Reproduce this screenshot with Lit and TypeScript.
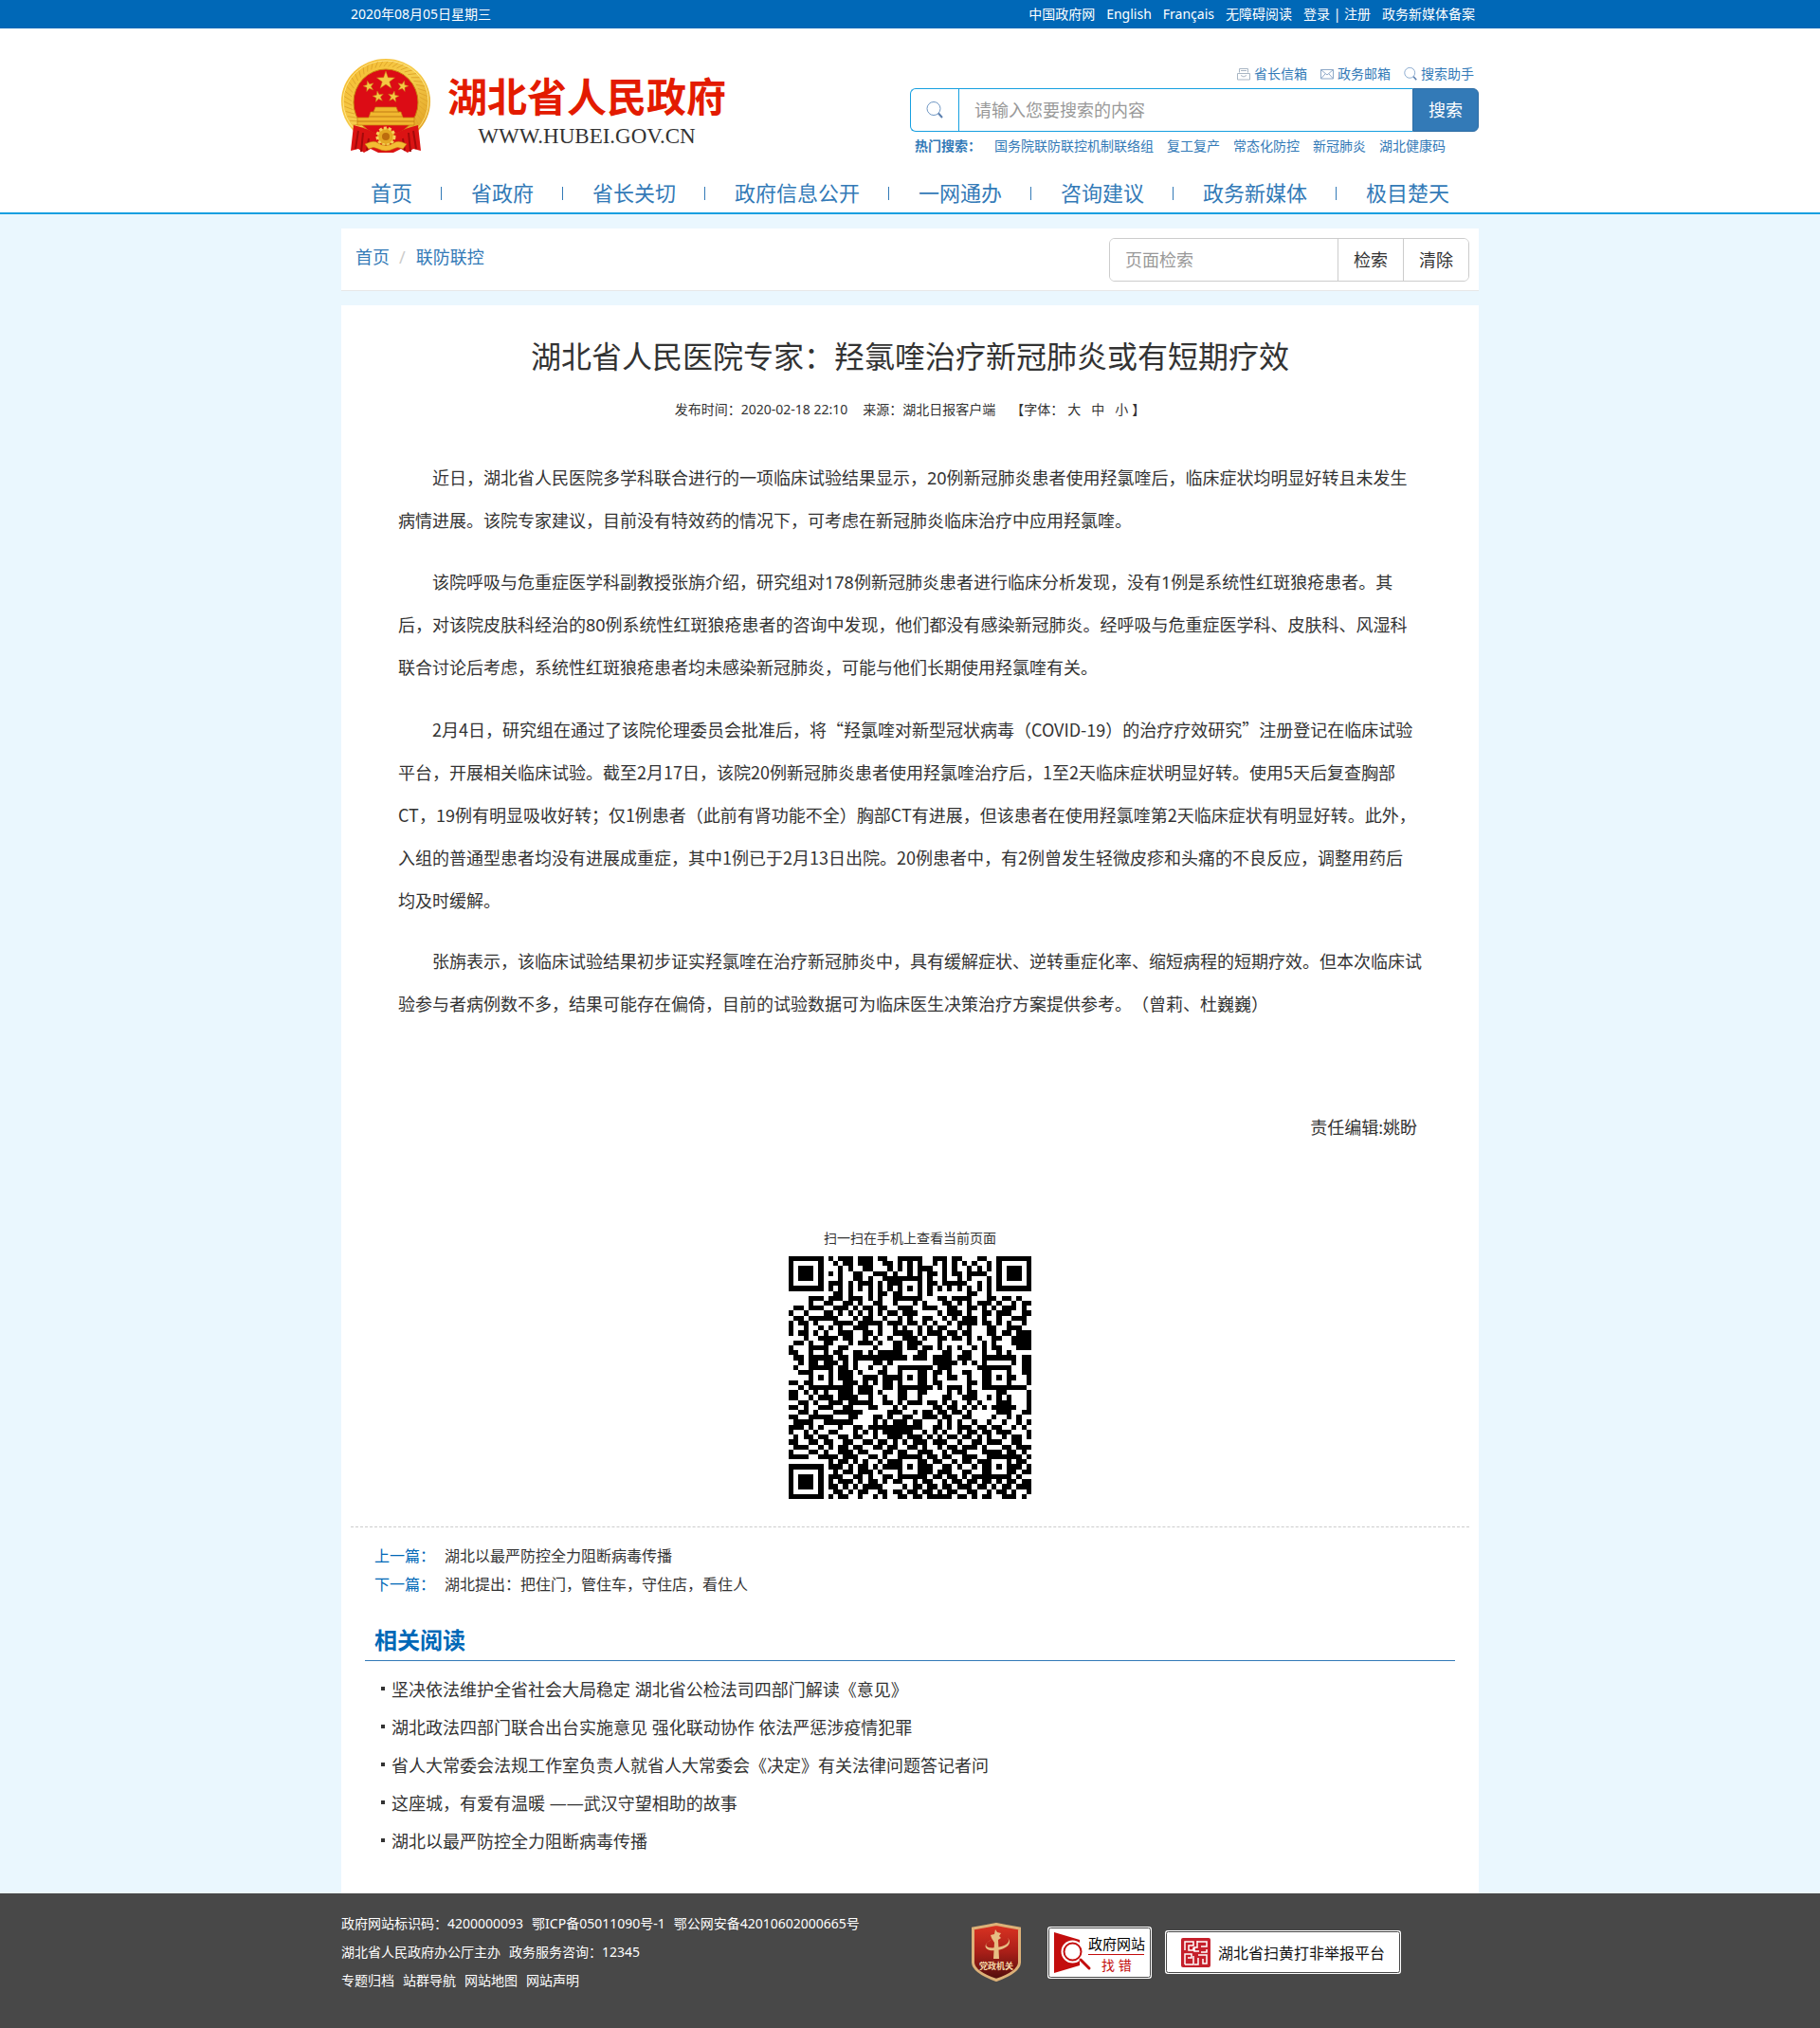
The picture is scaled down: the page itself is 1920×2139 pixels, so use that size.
import { LitElement, html, css, svg } from "lit";
import { customElement, state } from "lit/decorators.js";
import { classMap } from "lit/directives/class-map.js";

const TOP_LINKS = ["中国政府网", "English", "Français", "无障碍阅读"];
const NAV = ["首页", "省政府", "省长关切", "政府信息公开", "一网通办", "咨询建议", "政务新媒体", "极目楚天"];
const HOT = ["国务院联防联控机制联络组", "复工复产", "常态化防控", "新冠肺炎", "湖北健康码"];
// A word joiner (U+2060) keeps 均及时 on one line.
const PARAGRAPHS = [
  "近日，湖北省人民医院多学科联合进行的一项临床试验结果显示，20例新冠肺炎患者使用羟氯喹后，临床症状均明显好转且未发生病情进展。该院专家建议，目前没有特效药的情况下，可考虑在新冠肺炎临床治疗中应用羟氯喹。",
  "该院呼吸与危重症医学科副教授张旃介绍，研究组对178例新冠肺炎患者进行临床分析发现，没有1例是系统性红斑狼疮患者。其后，对该院皮肤科经治的80例系统性红斑狼疮患者的咨询中发现，他们都没有感染新冠肺炎。经呼吸与危重症医学科、皮肤科、风湿科联合讨论后考虑，系统性红斑狼疮患者均未感染新冠肺炎，可能与他们长期使用羟氯喹有关。",
  "2月4日，研究组在通过了该院伦理委员会批准后，将“羟氯喹对新型冠状病毒（COVID-19）的治疗疗效研究”注册登记在临床试验平台，开展相关临床试验。截至2月17日，该院20例新冠肺炎患者使用羟氯喹治疗后，1至2天临床症状明显好转。使用5天后复查胸部CT，19例有明显吸收好转；仅1例患者（此前有肾功能不全）胸部CT有进展，但该患者在使用羟氯喹第2天临床症状有明显好转。此外，入组的普通型患者均没有进展成重症，其中1例已于2月13日出院。20例患者中，有2例曾发生轻微皮疹和头痛的不良反应，调整用药后均\u2060及时缓解。",
  "张旃表示，该临床试验结果初步证实羟氯喹在治疗新冠肺炎中，具有缓解症状、逆转重症化率、缩短病程的短期疗效。但本次临床试验参与者病例数不多，结果可能存在偏倚，目前的试验数据可为临床医生决策治疗方案提供参考。（曾莉、杜巍巍）",
];
const RELATED = [
  "坚决依法维护全省社会大局稳定 湖北省公检法司四部门解读《意见》",
  "湖北政法四部门联合出台实施意见 强化联动协作 依法严惩涉疫情犯罪",
  "省人大常委会法规工作室负责人就省人大常委会《决定》有关法律问题答记者问",
  "这座城，有爱有温暖 ——武汉守望相助的故事",
  "湖北以最严防控全力阻断病毒传播",
];

// Data modules of the page's QR code, 49 x 49, in groups of seven.
const QR_ROWS = [
  "1111111 0101110 1110110 0111110 0111011 0001100 1111111",
  "1000001 0010110 1110011 0101010 0101010 1010010 1000001",
  "1011101 0001010 0110001 0101011 1001010 0101010 1011101",
  "1011101 0101001 1001110 1001010 1101011 0111100 1011101",
  "1011101 0001001 1010011 1001010 1001001 0100010 1011101",
  "1000001 0111010 1110101 1001010 1101111 1001010 1000001",
  "1111111 0101010 1010101 0101010 1010101 0101010 1111111",
  "0000000 0011010 0010110 1110010 1000000 0110010 0000000",
  "0000111 0111011 1010100 1001110 0011011 1100011 0110100",
  "0000101 1100110 1001100 1000101 0001101 0101110 1001011",
  "0110111 0011101 0110110 0111001 1100110 0110101 0111010",
  "1001001 1101010 1010101 1011100 0010111 0100110 1110011",
  "0110111 1110001 0110010 0101001 1001010 1110100 1001110",
  "1011010 0011110 1111101 1101101 0100101 1110110 1010010",
  "1001001 0101001 1100100 1010010 1011001 0100011 0011100",
  "1011010 1001110 0110100 1111010 1110110 1100011 0110111",
  "0001001 1110110 0101001 0011101 0011011 0101001 1001111",
  "0110100 1100010 1110100 1101110 0010000 0100101 0001111",
  "1000111 1001100 0001000 1101101 1010101 0010101 1000111",
  "1100100 1011001 1010111 1100011 0001100 1100100 1010000",
  "0110111 1101101 1111111 1110111 0111101 1100111 1111011",
  "0010111 1110101 0001101 0000000 0111110 1010100 0001011",
  "0100111 1101101 0010010 0111111 1011100 0001111 1110011",
  "0011100 0101110 1000110 0110001 0110100 1100101 0010011",
  "0000101 0101110 0111011 1110101 0100110 0100101 0101001",
  "1101100 0100111 0101011 0010001 0110000 0110111 0010001",
  "0010111 1111110 1110011 0011111 1010111 0100101 1111110",
  "1101010 1001110 1110100 0110011 0000101 0110000 1100001",
  "1100101 1101111 0010010 0110010 0001100 1110010 1010001",
  "0011011 0111011 1110011 0101110 1101010 0101000 1110001",
  "1101001 1100110 0011000 1010000 0110110 1010101 1111001",
  "0011010 0011111 1000001 1100101 1011011 0100000 1110011",
  "1100110 1100011 0001101 0011001 1101100 1100001 0010100",
  "0111101 1111110 0001010 1110110 0010101 0010010 0100101",
  "1110101 0001001 1011111 1111110 0110101 1101101 1001010",
  "1001010 0110001 0101011 1111001 0101001 0110110 1110001",
  "0101101 1001101 1001001 1101110 1010110 1101010 0101101",
  "1100110 1100110 0110110 1010111 0111001 0011011 1001100",
  "0111001 0101101 1001101 1001101 0010110 1110100 0110111",
  "1000110 1001110 1100011 0110011 1001011 1000111 1011010",
  "1111000 1110111 0011010 0111110 1101100 1110010 1001101",
  "0000000 0101101 0100101 1000101 0110010 1101101 1000110",
  "1111111 0111010 1101011 1010101 1001101 0010101 0101101",
  "1000001 0010110 1110100 0110001 1011100 1100111 0001011",
  "1011101 0111001 1010011 0111111 0110110 1011111 1110100",
  "1011101 0101110 1011010 1100101 1001011 0110110 1011011",
  "1011101 0110101 0111100 0010110 1101101 1101101 0110111",
  "1000001 0011010 1100110 1101101 1010110 0110010 1101001",
  "1111111 0101100 1001010 0110110 1111101 1010110 0111010",
].map((row) => row.replaceAll(" ", ""));

// Finder, timing and alignment squares lie over the data modules.
function isDark(row: number, col: number): boolean {
  for (const [r, c] of [[3, 3], [3, 45], [45, 3]]) {
    const d = Math.max(Math.abs(row - r), Math.abs(col - c));
    if (d <= 4) return d !== 2 && d !== 4;
  }
  for (const r of [6, 24, 42]) {
    for (const c of [6, 24, 42]) {
      if ((r === 6 && c !== 24) || (c === 6 && r !== 24)) continue;
      const d = Math.max(Math.abs(row - r), Math.abs(col - c));
      if (d <= 2) return d !== 1;
    }
  }
  if (row === 6) return col % 2 === 0;
  if (col === 6) return row % 2 === 0;
  return QR_ROWS[row][col] === "1";
}

function qrPath(): string {
  let d = "";
  for (let r = 0; r < 49; r++) {
    for (let c = 0; c < 49; c++) {
      if (isDark(r, c)) d += `M${c} ${r}h1v1h-1z`;
    }
  }
  return d;
}

function star(cx: number, cy: number, r: number, turn = 0): string {
  const pts: string[] = [];
  for (let i = 0; i < 10; i++) {
    const a = ((-90 + turn + i * 36) * Math.PI) / 180;
    const k = i % 2 ? r * 0.4 : r;
    pts.push(`${(cx + k * Math.cos(a)).toFixed(2)},${(cy + k * Math.sin(a)).toFixed(2)}`);
  }
  return pts.join(" ");
}

const grains = Array.from({ length: 40 }, (_, i) => {
  const t = ((128 + i * 7.3) * Math.PI) / 180;
  return svg`<path d="M${(47 + 36 * Math.cos(t)).toFixed(1)} ${(44 + 36 * Math.sin(t)).toFixed(1)}L${(47 + 44 * Math.cos(t + 0.12)).toFixed(1)} ${(44 + 42 * Math.sin(t + 0.12)).toFixed(1)}"/>`;
});

const emblem = html`<svg class="emblem" viewBox="0 0 94 100" aria-hidden="true">
  <defs>
    <linearGradient id="gold" x1="0" y1="0" x2="1" y2="1">
      <stop offset="0" stop-color="#f6b92c" /><stop offset=".5" stop-color="#f5cd4d" /><stop offset="1" stop-color="#dc9616" />
    </linearGradient>
  </defs>
  <ellipse cx="47" cy="45" rx="47" ry="45" fill="url(#gold)" />
  <g fill="none" stroke="#e0a62c" stroke-width="1">${grains}</g>
  <ellipse cx="47" cy="45" rx="45" ry="43" fill="none" stroke="#ffe486" stroke-width="1" />
  <ellipse cx="47" cy="46" rx="34" ry="35" fill="#dc0c15" stroke="#c98310" />
  <g fill="#f5c944" stroke="#c47a10" stroke-width=".5">
    <polygon points="${star(47, 23, 10)}" />
    <polygon points="${star(29, 29, 6, -15)}" />
    <polygon points="${star(65, 29, 6, 15)}" />
    <polygon points="${star(39, 40, 6, -10)}" />
    <polygon points="${star(55, 40, 6, 10)}" />
  </g>
  <path d="M36 51h22l2 5h3l2 6h12v8H17v-8h12l2-6h3z" fill="#f1b72f" stroke="#c77d10" stroke-width=".7" />
  <path d="M33 56h28M30 61h34M17 66h60" stroke="#b76d0c" stroke-width=".8" />
  <path d="M13 70q13 3 22 8l12 4 12-4q9-5 22-8l3 27-8-2-6 4-7-4-8 4H39l-8-4-7 4-6-4-8 2z" fill="#db1313" />
  <path d="M18 76l-3 19M23 78l-2 20M29 84l-2 13M76 76l3 19M71 78l2 20M65 84l2 13" stroke="#a30a0a" stroke-width="2" />
  <circle cx="47" cy="82" r="9" fill="#e4a823" stroke="#f7d15a" stroke-width="3" stroke-dasharray="3 2" />
  <circle cx="47" cy="82" r="4" fill="#bd6c0d" />
  <path d="M25 90q10-5 14-1 8 5 16 0 5-4 14 1l-4 5q-6-3-10 0-8 4-16 0-5-3-10 0z" fill="#f3bd33" stroke="#c47a10" stroke-width=".6" />
</svg>`;

const magnifier = (cls: string) => html`<svg class=${cls} viewBox="0 0 18 18" aria-hidden="true">
  <circle cx="8" cy="7.500" r="7" fill="none" stroke="#6f97c4" />
  <path d="M13 12.500l4 4.500" stroke="#5b7fae" stroke-width="2" />
</svg>`;

const printer = html`<svg class="mini" viewBox="0 0 14 14" fill="none" stroke="#a9b6c4" aria-hidden="true">
  <path d="M2.500 5.500v-4h9v4M4 3.500h6M.5 6.500h13v6.500H.5zM4 8.500q3 3 6 0" />
</svg>`;
const envelope = html`<svg class="mini" viewBox="0 0 14 14" fill="none" stroke="#8fa9c8" aria-hidden="true">
  <path d="M.5 2.500h13v9.500H.5zM.5 2.500l6.500 5.500 6.500-5.500M.5 12l4.500-5M13.500 12l-4.500-5" />
</svg>`;

const shield = html`<svg class="shield" viewBox="0 0 52 62" role="img" aria-label="党政机关">
  <defs>
    <linearGradient id="red" x1="0" y1="0" x2="0" y2="1">
      <stop offset="0" stop-color="#dc3322" /><stop offset=".5" stop-color="#a91f18" /><stop offset="1" stop-color="#4d0c0c" />
    </linearGradient>
  </defs>
  <path d="M1.500 6Q14 4 26 1.500 38 4 50.500 6v36Q50 52 26 60.500 2 52 1.500 42z" fill="url(#red)" stroke="#ddb178" stroke-width="3" />
  <path d="M23 38l1-17-3-5-1-3 4-1 1-5 2 3 4 1-2 3 2 2-3 2 1 20z" fill="#e7bd83" />
  <path d="M23 17c-12 5-9 11 3 9 9-1 16-5 12-10 6 6-2 12-12 13-13 2-16-7-3-12z" fill="#e7bd83" />
  <text x="26" y="49" text-anchor="middle" font-size="9" font-weight="700" fill="#f5d6a6">党政机关</text>
</svg>`;

const findError = html`<svg class="finder" viewBox="0 0 110 55" role="img" aria-label="政府网站找错">
  <rect width="110" height="55" rx="3" fill="#fff" />
  <rect x="1.500" y="1.500" width="107" height="52" rx="2" fill="none" stroke="#484848" />
  <path d="M7 6l27 8v27L7 49z" fill="#c30d0d" />
  <circle cx="26.500" cy="26.500" r="12" fill="#fff" />
  <circle cx="26.500" cy="26.500" r="9" fill="#fff" stroke="#c30d0d" stroke-width="2" />
  <path d="M35 35l9 9" stroke="#c30d0d" stroke-width="3" stroke-linecap="round" />
  <path d="M43 29.500h59" stroke="#c30d0d" />
  <text x="43" y="24" font-size="15" fill="#000">政府网站</text>
  <text x="57" y="46" font-size="14" fill="#c30d0d">找 错</text>
</svg>`;

const reportPlatform = html`<svg class="report" viewBox="0 0 249 46" role="img" aria-label="湖北省扫黄打非举报平台">
  <rect width="249" height="46" rx="3" fill="#fff" />
  <rect x="1.500" y="1.500" width="246" height="43" rx="2" fill="none" stroke="#484848" />
  <rect x="17" y="8" width="31" height="31" rx="2" fill="#c5202b" />
  <path d="M21 36V25h7v4h-4M21 36h9v-9M21 21V12h9v4h-5v5h5v-3M34 11v7h-3v4h5M34 12h10v5h-6M44 20v3h-6M35 26h9v9h-4v-5M35 29v7h-4" fill="none" stroke="#fff" stroke-width="1.500" />
  <text x="56" y="30" font-size="16" fill="#111">湖北省扫黄打非举报平台</text>
</svg>`;

@customElement("app-root")
export class AppRoot extends LitElement {
  @state() private query = "";

  static styles = css`
    :host {
      display: block;
      background: #eaf7fe;
      color: #333;
      font: 18px/26px "Noto Sans", "Noto Sans CJK SC", sans-serif;
      text-spacing-trim: space-all;
    }
    * { box-sizing: border-box; }
    a { color: #337ab7; text-decoration: none; white-space: nowrap; }
    h1, h2, p, ul { margin: 0; padding: 0; }
    ul { list-style: none; }
    svg { display: block; flex: none; }
    input, button { font: inherit; margin: 0; min-width: 0; }
    input::placeholder { color: #999; opacity: 1; }
    .wrap { max-width: 1200px; margin: 0 auto; }
    .topbar { background: #0068b7; color: #fff; font-size: 14px; line-height: 30px; }
    .topbar .wrap { display: flex; justify-content: space-between; padding: 0 4px 0 10px; }
    .topbar a { color: #fff; }
    .top-links { display: flex; gap: 12px; }
    .header { background: #fff; border-bottom: 2px solid #169fe0; }
    .brand-row { display: flex; justify-content: space-between; height: 154px; }
    .brand { display: flex; gap: 18px; padding-top: 32px; }
    .emblem { width: 94px; height: 100px; }
    .brand-text { display: flex; flex-direction: column; align-items: center; padding-top: 15px; }
    .brand-name { color: #e31b00; font-size: 42px; line-height: 50px; font-weight: 700; }
    .brand-url { color: #333; font: 23px/24px "Liberation Serif", serif; padding-top: 5px; }
    .tools { width: 600px; padding-top: 34px; font-size: 14px; line-height: 28px; }
    .quick { display: flex; justify-content: flex-end; gap: 14px; padding: 0 5px 1px 0; }
    .quick a { display: flex; align-items: center; gap: 4px; }
    .mini { width: 14px; height: 14px; }
    .search { display: flex; height: 46px; font-size: 18px; }
    .search-icon { display: flex; align-items: center; justify-content: center; width: 51px; background: #fff; border: 1px solid #169fe0; border-right: 0; border-radius: 6px 0 0 6px; }
    .lens { width: 18px; height: 18px; }
    .search-input { flex: 1; border: 1px solid #169fe0; border-right: 0; padding: 0 16px; background: #fff; outline: 0; border-radius: 0; }
    .search-button { width: 70px; border: 1px solid #2e6da4; background: #337ab7; color: #fff; border-radius: 0 6px 6px 0; padding: 0; }
    .hot { display: flex; gap: 14px; padding-left: 5px; line-height: 30px; color: #337ab7; }
    .nav { display: flex; height: 40px; padding-left: 31px; gap: 30px; font-size: 22px; line-height: 38px; }
    .nav li { display: flex; align-items: center; gap: 30px; }
    .nav a { padding-bottom: 2px; }
    .nav li + li::before { content: ""; width: 1px; height: 14px; margin-right: 1px; background: #337ab7; }
    .crumbs { display: flex; justify-content: space-between; margin-top: 15px; height: 66px; padding: 10px 10px 0 15px; background: #fff; border-bottom: 1px solid #e7e7e7; }
    .trail { display: flex; gap: 10px; line-height: 40px; }
    .slash { color: #ccc; padding-right: 1px; }
    .page-search { display: flex; width: 380px; height: 46px; border: 1px solid #ccc; border-radius: 6px; overflow: hidden; background: #fff; }
    .page-input { flex: 1; border: 0; padding: 0 16px; background: #fff; outline: 0; }
    .page-button { width: 69px; border: 0; border-left: 1px solid #ccc; background: #fff; color: #333; padding: 0; }
    .card { margin-top: 15px; background: #fff; padding: 32px 10px 35px; }
    .title { font-size: 32px; line-height: 44px; font-weight: 400; text-align: center; }
    .meta { display: flex; justify-content: center; gap: 16px; font-size: 14px; line-height: 24px; padding-top: 22px; }
    .sizes { display: flex; gap: 11px; padding: 0 4px; }
    .size-group { display: flex; }
    .size { border: 0; background: none; padding: 0; color: inherit; }
    .body { padding: 38px 50px 0; line-height: 45px; }
    .body p { text-indent: 36px; margin-bottom: 20px; }
    .body .quoting { font-family: "Noto Sans CJK SC", sans-serif; }
    .editor { text-align: right; padding: 65px 55px 0; line-height: 45px; }
    .qr-block { display: flex; flex-direction: column; align-items: center; padding: 82px 0 29px; font-size: 14px; line-height: 24px; }
    .qr { width: 256px; height: 256px; margin-top: 7px; }
    .siblings { border-top: 1px dashed #ccc; padding: 15px 25px 0; font-size: 16px; line-height: 30px; }
    .siblings li { display: flex; gap: 10px; }
    .siblings a { color: #333; }
    .label { color: #0068b7; }
    .related-title { margin: 25px 15px 0; padding: 0 10px 2px; border-bottom: 1px solid #337ab7; color: #0068b7; font-size: 24px; line-height: 38px; }
    .related { padding: 10px 32px 0; line-height: 40px; }
    .related li { display: flex; align-items: center; gap: 7px; }
    .related li::before { content: ""; width: 4px; height: 4px; margin-bottom: 3px; background: #333; }
    .related a { color: #333; }
    .footer { background: #484848; color: #fff; font-size: 14px; line-height: 30px; padding: 17px 0 35px; }
    .footer a { color: #fff; }
    .footer .wrap { display: grid; grid-template-columns: 665px 1fr; align-items: center; }
    .line { display: flex; gap: 9px; }
    .badges { display: flex; align-items: center; gap: 14px; }
    .shield { width: 52px; height: 62px; margin-right: 14px; }
    .finder { width: 110px; height: 55px; }
    .report { width: 249px; height: 46px; }
  `;

  render() {
    return html`
      <div class="topbar"><div class="wrap">
        <span>2020年08月05日星期三</span>
        <div class="top-links">
          ${TOP_LINKS.map((t) => html`<a href="#">${t}</a>`)}
          <span><a href="#">登录</a> | <a href="#">注册</a></span>
          <a href="#">政务新媒体备案</a>
        </div>
      </div></div>
      <header class="header"><div class="wrap">
        <div class="brand-row">
          <a class="brand" href="#">${emblem}
            <span class="brand-text"><span class="brand-name">湖北省人民政府</span><span class="brand-url">WWW.HUBEI.GOV.CN</span></span>
          </a>
          <div class="tools">
            <div class="quick">
              <a href="#">${printer}省长信箱</a><a href="#">${envelope}政务邮箱</a><a href="#">${magnifier("mini")}搜索助手</a>
            </div>
            <form class="search" @submit=${(e: Event) => e.preventDefault()}>
              <label class="search-icon" for="site-search">${magnifier("lens")}</label>
              <input class="search-input" id="site-search" type="text" placeholder="请输入您要搜索的内容" />
              <button class="search-button">搜索</button>
            </form>
            <div class="hot"><b>热门搜索：</b>${HOT.map((t) => html`<a href="#">${t}</a>`)}</div>
          </div>
        </div>
        <nav><ul class="nav">${NAV.map((t) => html`<li><a href="#">${t}</a></li>`)}</ul></nav>
      </div></header>
      <main class="wrap">
        <div class="crumbs">
          <div class="trail"><a href="#">首页</a><span class="slash">/</span><a href="#">联防联控</a></div>
          <form class="page-search" @submit=${(e: Event) => e.preventDefault()}>
            <input class="page-input" type="text" aria-label="页面检索" placeholder="页面检索" .value=${this.query}
              @input=${(e: Event) => (this.query = (e.target as HTMLInputElement).value)} />
            <button class="page-button">检索</button>
            <button class="page-button" type="button" @click=${() => (this.query = "")}>清除</button>
          </form>
        </div>
        <article class="card">
          <h1 class="title">湖北省人民医院专家：羟氯喹治疗新冠肺炎或有短期疗效</h1>
          <div class="meta">
            <span>发布时间：2020-02-18 22:10</span><span>来源：湖北日报客户端</span>
            <span class="size-group">【字体：<span class="sizes">${["大", "中", "小"].map((s) => html`<button class="size">${s}</button>`)}</span>】</span>
          </div>
          <div class="body">${PARAGRAPHS.map((p) => html`<p class=${classMap({ quoting: p.includes("“") })}>${p}</p>`)}</div>
          <p class="editor">责任编辑:姚盼</p>
          <div class="qr-block">
            <span>扫一扫在手机上查看当前页面</span>
            <svg class="qr" viewBox="0 0 49 49" shape-rendering="crispEdges" role="img" aria-label="二维码"><path d=${qrPath()} fill="#000" /></svg>
          </div>
          <ul class="siblings">
            <li><span class="label">上一篇：</span><a href="#">湖北以最严防控全力阻断病毒传播</a></li>
            <li><span class="label">下一篇：</span><a href="#">湖北提出：把住门，管住车，守住店，看住人</a></li>
          </ul>
          <h2 class="related-title">相关阅读</h2>
          <ul class="related">${RELATED.map((t) => html`<li><a href="#">${t}</a></li>`)}</ul>
        </article>
      </main>
      <footer class="footer"><div class="wrap">
        <div>
          <div class="line"><span>政府网站标识码：4200000093</span><a href="#">鄂ICP备05011090号-1</a><a href="#">鄂公网安备42010602000665号</a></div>
          <div class="line"><span>湖北省人民政府办公厅主办</span><span>政务服务咨询：12345</span></div>
          <div class="line">${["专题归档", "站群导航", "网站地图", "网站声明"].map((t) => html`<a href="#">${t}</a>`)}</div>
        </div>
        <div class="badges"><a href="#">${shield}</a><a href="#">${findError}</a><a href="#">${reportPlatform}</a></div>
      </div></footer>
    `;
  }
}
